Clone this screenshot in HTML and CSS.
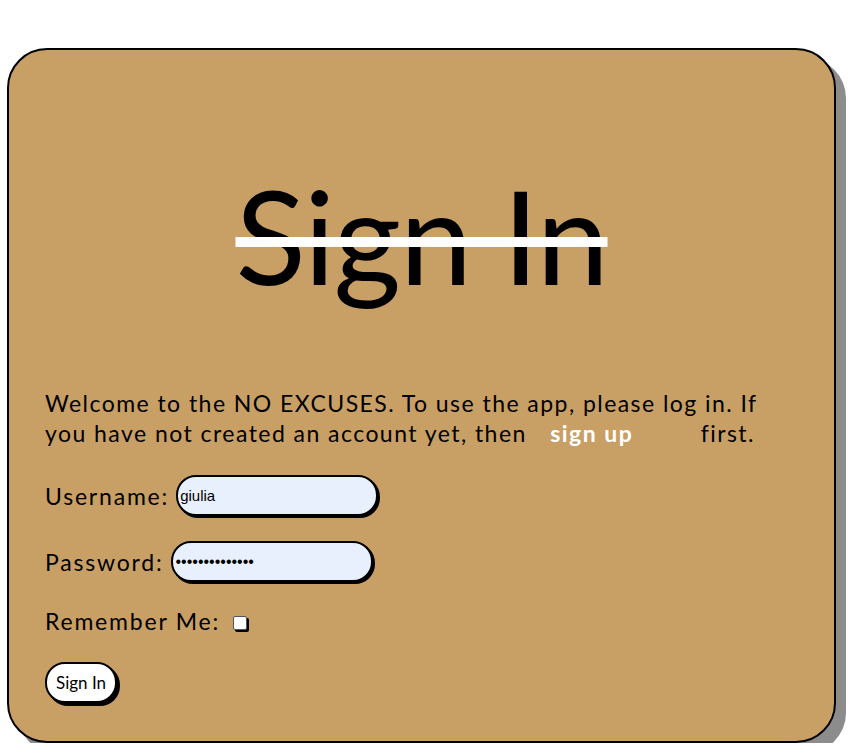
FILE: index.html
```html
<!DOCTYPE html>
<html lang="en">
<head>
<meta charset="utf-8">
<title>Sign In</title>
<link rel="stylesheet" href="styles.css">
</head>
<body>
<main class="card">
  <h1 class="title">Sign In</h1>
  <p class="intro">Welcome to the NO EXCUSES. To use the app, please log in. If you have not created an account yet, then <a class="signup" href="#">sign up</a> first.</p>
  <form class="form">
    <div class="row">
      <label class="label" for="username">Username:</label>
      <input class="field field-user" id="username" type="text" value="giulia">
    </div>
    <div class="row">
      <label class="label" for="password">Password:</label>
      <input class="field field-pass" id="password" type="password" value="supersecret123">
    </div>
    <div class="row row-check">
      <label class="label" for="remember">Remember Me:</label>
      <span class="check" id="remember"></span>
    </div>
    <div class="row row-btn">
      <button class="btn" type="button">Sign In</button>
    </div>
  </form>
</main>
</body>
</html>
```
FILE: styles.css
```css
html, body {
  margin: 0;
  padding: 0;
  background: #fff;
}
body {
  font-family: Lato, "Liberation Sans", sans-serif;
  color: #000;
}
.card {
  box-sizing: border-box;
  width: 829px;
  height: 695px;
  margin: 48px 0 0 7px;
  background: #c89f65;
  border: 2px solid #000;
  border-radius: 40px;
  box-shadow: 10px 10px 0 #8c8c8c;
  padding: 0 36px;
}
.title {
  margin: 0;
  padding-top: 105px;
  text-align: center;
  font-weight: 400;
  font-size: 130px;
  line-height: 160px;
  height: 233px;
  letter-spacing: -1.5px;
  text-decoration: line-through;
  text-decoration-color: #fff;
  text-decoration-thickness: 10px;
}
.intro {
  margin: 0;
  font-size: 23px;
  line-height: 30px;
  letter-spacing: 1.45px;
}
.signup {
  color: #fff;
  font-weight: 700;
  text-decoration: none;
  letter-spacing: 1.5px;
  margin: 0 60px 0 16px;
}
.form {
  margin-top: 27px;
  display: flex;
  flex-direction: column;
  gap: 25px;
}
.row {
  display: flex;
  align-items: center;
  font-size: 23px;
  letter-spacing: 1.8px;
}
.row-btn {
  margin-top: 2px;
}
.label {
  margin-right: 7px;
}
.field {
  box-sizing: border-box;
  width: 202px;
  height: 41px;
  border: 2px solid #000;
  border-radius: 20px;
  background: #e8f0fe;
  box-shadow: 2px 2px 0 #000;
  font-family: "Liberation Sans", Arial, sans-serif;
  font-size: 15px;
  letter-spacing: 0;
  padding: 0 2px;
  color: #000;
  outline: none;
}
.field-pass {
  font-size: 16px;
  padding: 0 3px;
}
.check {
  box-sizing: border-box;
  width: 14px;
  height: 14px;
  margin-left: 6px;
  margin-top: 3px;
  background: #fff;
  border: 1px solid #555;
  border-radius: 2px;
  box-shadow: 2px 2px 0 #000;
}
.btn {
  box-sizing: border-box;
  height: 41px;
  padding: 0 9px;
  border: 2px solid #000;
  border-radius: 20px;
  background: #fff;
  box-shadow: 3px 3px 0 #000;
  font-family: Lato, sans-serif;
  font-size: 17px;
  letter-spacing: 0;
  color: #000;
}
```
